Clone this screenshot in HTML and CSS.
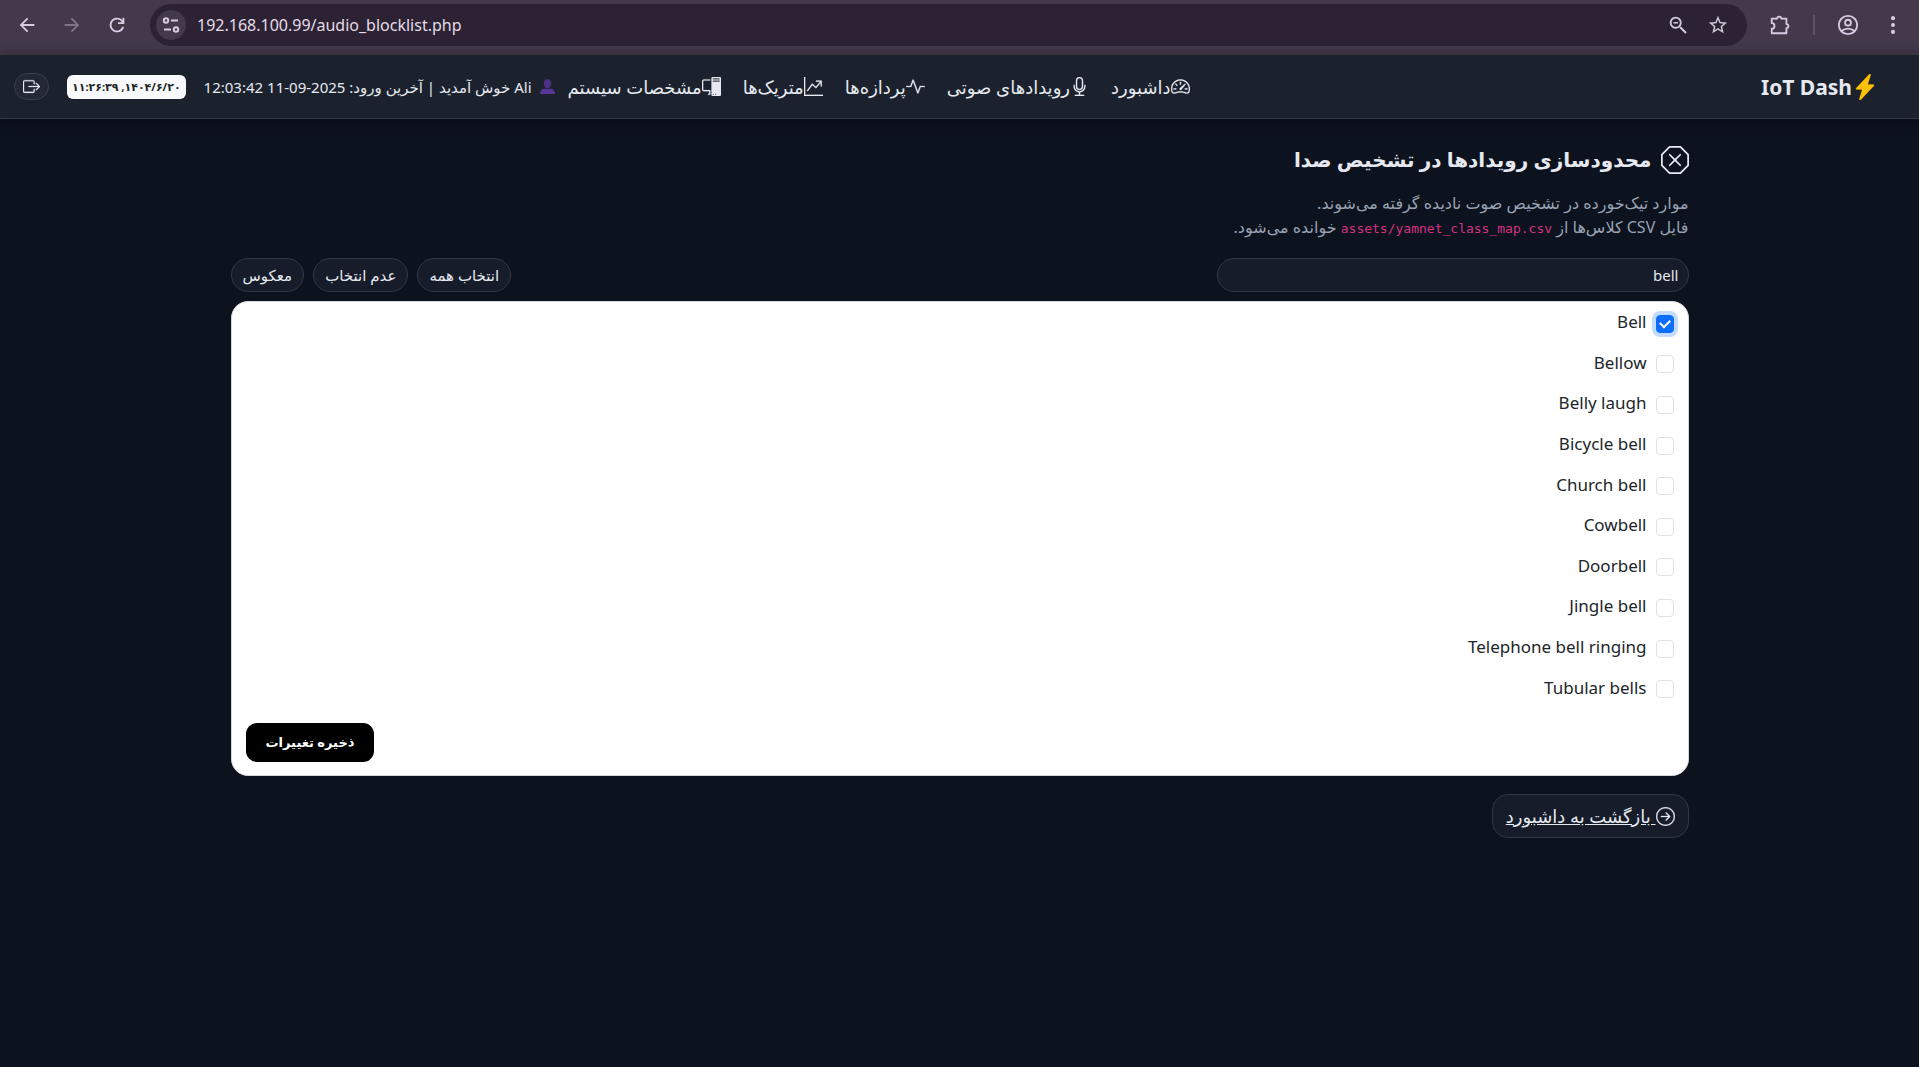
FILE: index.html
```html
<!DOCTYPE html>
<html lang="fa" dir="rtl">
<head>
<meta charset="utf-8">
<title>IoT Dash</title>
<meta name="viewport" content="width=device-width, initial-scale=1">
<link rel="stylesheet" href="styles.css">
</head>
<body>
<div class="browser" dir="ltr">
  <button class="tool" type="button" aria-label="Back"><svg viewBox="0 0 24 24"><path d="M20 11H7.83l5.59-5.59L12 4l-8 8 8 8 1.41-1.41L7.83 13H20z"/></svg></button>
  <button class="tool tool-off" type="button" aria-label="Forward"><svg viewBox="0 0 24 24"><path d="M4 11h12.17l-5.59-5.59L12 4l8 8-8 8-1.41-1.41L16.17 13H4z"/></svg></button>
  <button class="tool" type="button" aria-label="Reload"><svg viewBox="0 0 24 24"><path d="M12 20a8 8 0 1 1 5.7-13.6L18 6.7V4h2v7h-7V9h4.2A6 6 0 1 0 17.7 14h2.1A8 8 0 0 1 12 20z"/></svg></button>
  <div class="address">
    <button class="site" type="button" aria-label="Site information"><svg viewBox="0 0 18 18"><g fill="none" stroke="currentColor" stroke-width="2"><circle cx="4" cy="4.500" r="2.200"/><path d="M9 4.500h7M2 13.500h7"/><circle cx="14" cy="13.500" r="2.200"/></g></svg></button>
    <input class="url" type="text" aria-label="Address" value="192.168.100.99/audio_blocklist.php">
    <button class="tool tool-in" type="button" aria-label="Zoom"><svg viewBox="0 0 24 24"><path fill-rule="evenodd" d="M15.500 14h-.790l-.280-.270A6.500 6.500 0 1 0 13.730 14.430l.270.280v.790L20 21.500l1.500-1.500zm-6 0a4.500 4.500 0 1 1 0-9 4.500 4.500 0 0 1 0 9zM7 8.700h5v1.600H7z"/></svg></button>
    <button class="tool tool-in" type="button" aria-label="Bookmark"><svg viewBox="0 0 24 24"><path fill-rule="evenodd" d="M22 9.240l-7.190-.620L12 2 9.190 8.630 2 9.240l5.460 4.730L5.820 21 12 17.270 18.180 21l-1.630-7.030zM12 15.400l-3.760 2.270 1-4.280-3.320-2.880 4.380-.380L12 6.100l1.710 4.040 4.380.380-3.320 2.880 1 4.280z"/></svg></button>
  </div>
  <button class="tool" type="button" aria-label="Extensions"><svg viewBox="0 0 24 24"><path fill="none" stroke="currentColor" stroke-width="2" stroke-linejoin="round" d="M3 5h6a2.200 2.200 0 0 1 4.400 0H19v6a2.200 2.200 0 0 1 0 4.400V21H3v-5a3 3 0 0 0 0-6z"/></svg></button>
  <span class="split"></span>
  <button class="tool" type="button" aria-label="Profile"><svg viewBox="0 0 24 24"><g fill="none" stroke="currentColor" stroke-width="2"><circle cx="12" cy="12" r="10"/><circle cx="12" cy="9.500" r="3.200"/><path d="M5 18.500c4-3.400 10-3.400 14 0"/></g></svg></button>
  <button class="tool" type="button" aria-label="Menu"><svg viewBox="0 0 24 24"><circle cx="12" cy="4.500" r="2.200"/><circle cx="12" cy="12" r="2.200"/><circle cx="12" cy="19.500" r="2.200"/></svg></button>
</div>

<header class="topbar">
  <a class="brand" href="#"><svg class="icon bolt" viewBox="0 0 16 16"><path d="M11.251.068a.5.5 0 0 1 .227.58L9.677 6.500H13a.5.5 0 0 1 .364.843l-8 8.500a.5.5 0 0 1-.842-.490L6.323 9.500H3a.5.5 0 0 1-.364-.843l8-8.500a.5.5 0 0 1 .615-.090z"/></svg>IoT Dash</a>
  <div class="topbar-end">
  <nav class="nav">
    <a href="#"><svg class="icon" viewBox="0 0 16 16"><path d="M8 4a.5.5 0 0 1 .5.5V6a.5.5 0 0 1-1 0V4.500A.5.5 0 0 1 8 4M3.732 5.732a.5.5 0 0 1 .707 0l.915.914a.5.5 0 1 1-.708.708l-.914-.915a.5.5 0 0 1 0-.707M2 10a.5.5 0 0 1 .5-.5h1.586a.5.5 0 0 1 0 1H2.500A.5.5 0 0 1 2 10m9.500 0a.5.5 0 0 1 .5-.5h1.500a.5.5 0 0 1 0 1H12a.5.5 0 0 1-.5-.5m.754-4.246a.39.39 0 0 0-.527-.020L7.547 9.310a.91.91 0 1 0 1.302 1.258l3.434-4.297a.39.39 0 0 0-.029-.518z"/><path fill-rule="evenodd" d="M0 10a8 8 0 1 1 15.547 2.661c-.442 1.253-1.845 1.602-2.932 1.250C11.309 13.488 9.475 13 8 13c-1.474 0-3.310.488-4.615.911-1.087.352-2.490.003-2.932-1.250A8 8 0 0 1 0 10m8-7a7 7 0 0 0-6.603 9.329c.203.575.923.876 1.680.630C4.397 12.533 6.358 12 8 12s3.604.532 4.923.960c.757.245 1.477-.056 1.680-.631A7 7 0 0 0 8 3"/></svg>داشبورد</a>
    <a href="#"><svg class="icon" viewBox="0 0 16 16"><path d="M3.500 6.500A.5.5 0 0 1 4 7v1a4 4 0 0 0 8 0V7a.5.5 0 0 1 1 0v1a5 5 0 0 1-4.500 4.975V15h3a.5.5 0 0 1 0 1h-7a.5.5 0 0 1 0-1h3v-2.025A5 5 0 0 1 3 8V7a.5.5 0 0 1 .5-.5"/><path d="M10 8a2 2 0 1 1-4 0V3a2 2 0 1 1 4 0zM8 0a3 3 0 0 0-3 3v5a3 3 0 0 0 6 0V3a3 3 0 0 0-3-3"/></svg>رویدادهای صوتی</a>
    <a href="#"><svg class="icon" viewBox="0 0 16 16"><path d="M6 2a.5.5 0 0 1 .470.330L10 12.036l1.530-4.208A.5.5 0 0 1 12 7.500h3.500a.5.5 0 0 1 0 1h-3.150l-1.880 5.170a.5.5 0 0 1-.940 0L6 3.964 4.470 8.171A.5.5 0 0 1 4 8.500H.5a.5.5 0 0 1 0-1h3.150l1.880-5.170A.5.5 0 0 1 6 2"/></svg>پردازه‌ها</a>
    <a href="#"><svg class="icon" viewBox="0 0 16 16"><path fill-rule="evenodd" d="M0 0h1v15h15v1H0zm10 3.500a.5.5 0 0 1 .5-.5h4a.5.5 0 0 1 .5.5v4a.5.5 0 0 1-1 0V4.900l-3.613 4.417a.5.5 0 0 1-.740.037L7.060 6.767l-3.656 5.027a.5.5 0 0 1-.808-.588l4-5.500a.5.5 0 0 1 .758-.060l2.609 2.610L13.445 4H10.500a.5.5 0 0 1-.5-.5"/></svg>متریک‌ها</a>
    <a href="#"><svg class="icon" viewBox="0 0 16 16"><path d="M8 1a1 1 0 0 1 1-1h6a1 1 0 0 1 1 1v14a1 1 0 0 1-1 1H9a1 1 0 0 1-1-1zm1 13.500a.5.5 0 1 0 1 0 .5.5 0 0 0-1 0m2 0a.5.5 0 1 0 1 0 .5.5 0 0 0-1 0M9.500 1a.5.5 0 0 0 0 1h5a.5.5 0 0 0 0-1zM9 3.500a.5.5 0 0 0 .5.5h5a.5.5 0 0 0 0-1h-5a.5.5 0 0 0-.5.5M1.500 2A1.500 1.500 0 0 0 0 3.500v7A1.500 1.500 0 0 0 1.500 12H6v2h-.5a.5.5 0 0 0 0 1H7v-4H1.500a.5.5 0 0 1-.5-.5v-7a.5.5 0 0 1 .5-.5H7V2z"/></svg>مشخصات سیستم</a>
  </nav>
  <div class="account">
    <p class="welcome"><svg class="person" viewBox="0 0 16 16"><path fill="#4c2f86" d="M8 0c2.600 0 4 1.900 4 4.500S10.300 10 8 10 4 7.100 4 4.500 5.400 0 8 0z"/><path fill="#57369a" d="M0 16c0-4 2.500-5.500 5.500-5.800C7 11.200 9 11.200 10.500 10.200 13.500 10.500 16 12 16 16z"/></svg><span>Ali خوش آمدید | آخرین ورود: 2025-09-11 12:03:42</span></p>
    <time class="clock">۱۴۰۴/۶/۲۰, ۱۱:۲۶:۳۹</time>
    <button class="pill logout" type="button" aria-label="خروج"><svg class="icon" viewBox="0 0 16 16"><path fill-rule="evenodd" d="M10 12.500a.5.5 0 0 1-.5.5h-8a.5.5 0 0 1-.5-.5v-9a.5.5 0 0 1 .5-.5h8a.5.5 0 0 1 .5.5v2a.5.5 0 0 0 1 0v-2A1.500 1.500 0 0 0 9.500 2h-8A1.500 1.500 0 0 0 0 3.500v9A1.500 1.500 0 0 0 1.500 14h8a1.500 1.500 0 0 0 1.500-1.500v-2a.5.5 0 0 0-1 0z"/><path fill-rule="evenodd" d="M15.854 8.354a.5.5 0 0 0 0-.708l-3-3a.5.5 0 0 0-.708.708L14.293 7.500H5.500a.5.5 0 0 0 0 1h8.793l-2.147 2.146a.5.5 0 0 0 .708.708z"/></svg></button>
  </div>
  </div>
</header>

<main class="page">
  <h1 class="title"><svg class="icon title-icon" viewBox="0 0 16 16"><path d="M4.540.146A.5.5 0 0 1 4.893 0h6.214a.5.5 0 0 1 .353.146l4.394 4.394a.5.5 0 0 1 .146.353v6.214a.5.5 0 0 1-.146.353l-4.394 4.394a.5.5 0 0 1-.353.146H4.893a.5.5 0 0 1-.353-.146L.146 11.460A.5.5 0 0 1 0 11.107V4.893a.5.5 0 0 1 .146-.353zM5.100 1 1 5.100v5.800L5.100 15h5.800l4.100-4.100V5.100L10.900 1z"/><path d="M4.646 4.646a.5.5 0 0 1 .708 0L8 7.293l2.646-2.647a.5.5 0 0 1 .708.708L8.707 8l2.647 2.646a.5.5 0 0 1-.708.708L8 8.707l-2.646 2.647a.5.5 0 0 1-.708-.708L7.293 8 4.646 5.354a.5.5 0 0 1 0-.708"/></svg>محدودسازی رویدادها در تشخیص صدا</h1>
  <p class="lead">موارد تیک‌خورده در تشخیص صوت نادیده گرفته می‌شوند.<br>فایل CSV کلاس‌ها از <code dir="ltr">assets/yamnet_class_map.csv</code> خوانده می‌شود.</p>

  <form class="editor">
    <div class="filters">
      <input class="pill search" type="text" aria-label="جستجو" value="bell">
      <div class="bulk">
        <button class="pill" type="button">انتخاب همه</button>
        <button class="pill" type="button">عدم انتخاب</button>
        <button class="pill" type="button">معکوس</button>
      </div>
    </div>
    <div class="card">
      <div class="events">
        <label class="event"><input class="focused" type="checkbox" checked><span>Bell</span></label>
        <label class="event"><input type="checkbox"><span>Bellow</span></label>
        <label class="event"><input type="checkbox"><span>Belly laugh</span></label>
        <label class="event"><input type="checkbox"><span>Bicycle bell</span></label>
        <label class="event"><input type="checkbox"><span>Church bell</span></label>
        <label class="event"><input type="checkbox"><span>Cowbell</span></label>
        <label class="event"><input type="checkbox"><span>Doorbell</span></label>
        <label class="event"><input type="checkbox"><span>Jingle bell</span></label>
        <label class="event"><input type="checkbox"><span>Telephone bell ringing</span></label>
        <label class="event"><input type="checkbox"><span>Tubular bells</span></label>
      </div>
      <button class="save" type="submit">ذخیره تغییرات</button>
    </div>
  </form>

  <a class="back" href="#"><svg class="icon" viewBox="0 0 16 16"><path fill-rule="evenodd" d="M1 8a7 7 0 1 0 14 0A7 7 0 0 0 1 8m15 0A8 8 0 1 1 0 8a8 8 0 0 1 16 0M4.500 7.500a.5.5 0 0 0 0 1h5.793l-2.147 2.146a.5.5 0 0 0 .708.708l3-3a.5.5 0 0 0 0-.708l-3-3a.5.5 0 1 0-.708.708L10.293 7.500z"/></svg>&nbsp;بازگشت به داشبورد</a>
</main>
</body>
</html>
```
FILE: styles.css
```css
* { box-sizing: border-box; }

body {
  margin: 0;
  min-height: 100vh;
  background: #0c121e;
  color: #e6e9f0;
  font-family: "Noto Sans", "DejaVu Sans", sans-serif;
  font-size: 16px;
  line-height: 24px;
}

button, input { font: inherit; color: inherit; }
button { cursor: pointer; }
a { color: inherit; text-decoration: none; }
svg { display: block; flex: none; fill: currentColor; }
.icon { width: 19px; height: 19px; stroke: currentColor; stroke-width: 0.2; }

/* Browser toolbar */
.browser {
  display: flex;
  align-items: center;
  padding: 4px 14px 7px 15px;
  gap: 21px;
  background: #43394b;
  border-bottom: 2px solid #4d434f;
  color: #d9c9e3;
}
.tool { padding: 0; border: 0; background: none; }
.tool svg { width: 24px; height: 24px; padding: 1px; }
.tool-off { color: #80748a; }
.tool-in { color: #d2cad4; }
.address {
  flex: 1;
  display: flex;
  align-items: center;
  gap: 16px;
  height: 42px;
  padding: 0 17px 0 6px;
  border-radius: 21px;
  background: #2c2234;
}
.site {
  display: grid;
  place-items: center;
  width: 30px;
  height: 30px;
  padding: 0;
  border: 0;
  border-radius: 50%;
  background: #43394b;
}
.site svg { width: 18px; height: 18px; }
.url {
  flex: 1;
  padding: 0;
  margin-left: -5px;
  border: 0;
  outline: 0;
  background: none;
  color: #e4dce8;
}
.split { width: 2px; height: 20px; background: #5d5266; }

/* Site header */
.topbar {
  display: flex;
  align-items: center;
  min-height: 64px;
  padding: 0 41px 0 14px;
  background: #1b222d;
  border-bottom: 1px solid #323844;
  box-shadow: 0 2px 10px #080c16;
}
.brand {
  display: flex;
  align-items: center;
  font-size: 21px;
  font-weight: 700;
}
.bolt { width: 26px; height: 26px; color: #ffc107; }
.topbar-end {
  flex: 1;
  display: flex;
  align-items: center;
  justify-content: flex-end;
  gap: 13px;
}
.nav { display: flex; gap: 22px; font-size: 18px; }
.nav a { display: flex; align-items: center; white-space: nowrap; }
.account { display: flex; align-items: center; gap: 18px; }
.welcome {
  display: flex;
  align-items: center;
  gap: 8px;
  margin: 0;
  font-size: 15px;
  white-space: nowrap;
}
.person { width: 15px; height: 15px; }
.clock {
  padding: 0 5px;
  border-radius: 6px;
  background: #f8f9fa;
  color: #212529;
  font-size: 11px;
  font-weight: 700;
  white-space: nowrap;
}
.pill {
  padding: 4px 11px;
  border: 1px solid #323844;
  border-radius: 17px;
  background: #161c29;
  color: #e6e9f0;
  font-size: 15px;
}
.logout { padding: 4px 8px; background: #222935; border-color: #3c424d; }
.logout .icon { width: 17px; height: 17px; }

/* Blocklist page */
.page {
  max-width: 1490px;
  margin: 0 auto;
  padding: 26px 16px;
}
.title {
  display: flex;
  align-items: center;
  gap: 9px;
  margin: 0;
  font-size: 20px;
  line-height: 30px;
}
.title-icon { width: 28px; height: 28px; stroke: none; }
.lead { margin: 16px 0 17px; color: #98a2b3; font-size: 16px; }
.lead code { color: #d63384; font-family: "DejaVu Sans Mono", monospace; font-size: 13px; }
.filters { display: flex; align-items: center; justify-content: space-between; margin-bottom: 9px; }
.search { width: 472px; padding: 4px 9px; outline: 0; }
.bulk { display: flex; gap: 9px; }
.card {
  display: flex;
  flex-direction: column;
  padding: 0 14px 13px;
  border: 1px solid #d5d8dc;
  border-radius: 17px;
  background: #fff;
}
.events { display: grid; grid-auto-rows: 1fr; justify-items: start; min-height: 406px; margin-bottom: 15px; }
.event { display: flex; align-items: center; gap: 9px; color: #212529; font-size: 17px; }
.event input {
  appearance: none;
  display: grid;
  place-items: center;
  width: 18px;
  height: 18px;
  margin: 3px 0 0;
  border: 1px solid #dee2e6;
  border-radius: 4px;
  background: #fff;
}
.event input:checked { background: #0d6efd; border-color: #0d6efd; }
.event input:checked::before {
  content: "";
  width: 8px;
  height: 5px;
  margin-bottom: 2px;
  border: solid #fff;
  border-width: 0 0 2px 2px;
  rotate: -45deg;
}
.event .focused { box-shadow: 0 0 0 4px #c2dbfe; }
.save {
  align-self: flex-end;
  padding: 7px 20px 8px;
  border: 0;
  border-radius: 11px;
  background: #000;
  color: #fff;
  font-size: 13px;
  font-weight: 700;
}
.back {
  display: inline-flex;
  align-items: center;
  margin-top: 18px;
  padding: 9px 13px;
  border: 1px solid #323844;
  border-radius: 16px;
  background: #161c29;
  font-size: 18px;
  text-decoration: underline;
}
```
